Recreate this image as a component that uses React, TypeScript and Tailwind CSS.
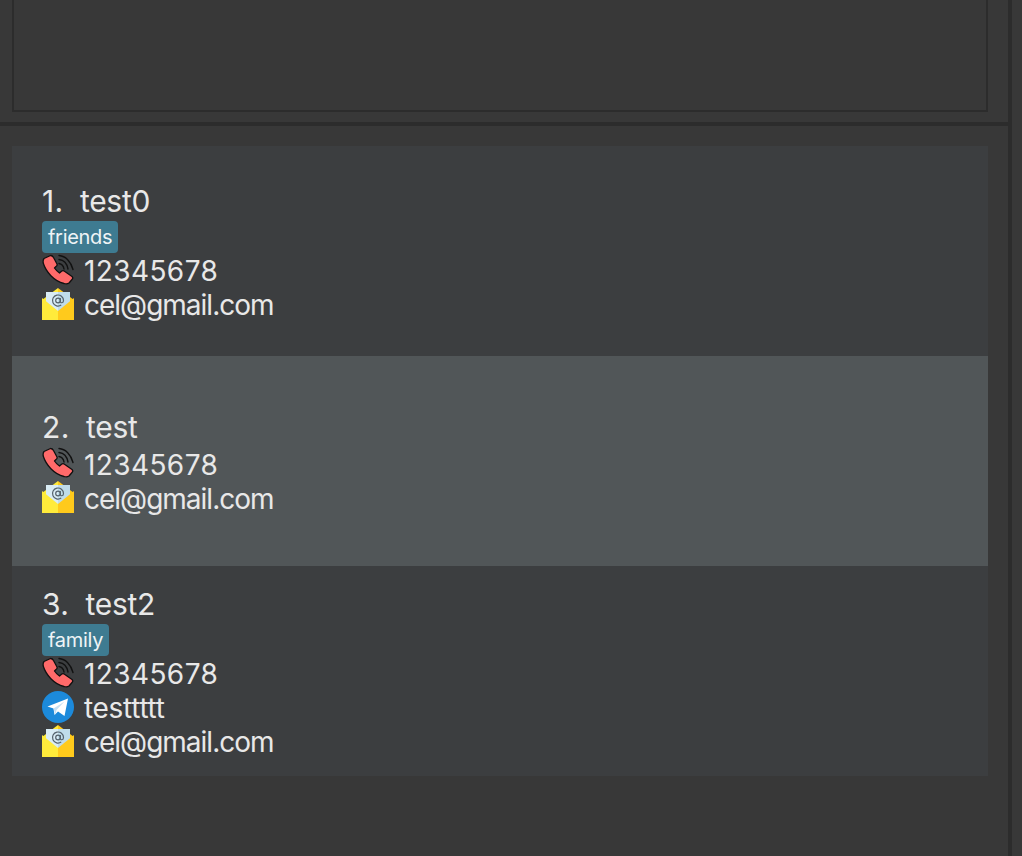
import React from "react";

type Person = {
  name: string;
  tag?: string;
  telegram?: string;
};

const people: Person[] = [
  { name: "test0", tag: "friends" },
  { name: "test" },
  { name: "test2", tag: "family", telegram: "testtttt" },
];

function PhoneIcon() {
  return (
    <svg viewBox="0 0 32 32" className="h-8 w-8 shrink-0">
      <path
        d="M2 4.500 8.500 1.500q2 0 3 2l3.500 6.500q.5 1.500-1 2.500L12.500 14q2 3 5 5l2-1.800q1.500-1 3 0l7.500 5.300q1.500 1.500 0 3l-3 3.500q-2 1.500-5 .5C12 27 4 18 1.200 9Q.8 6 2 4.500z"
        fill="#ff6a6a"
        stroke="#111"
        strokeWidth="1.300"
        strokeLinejoin="round"
      />
      <g fill="none" stroke="#111" strokeWidth="1.400" strokeLinecap="round">
        <path d="M17 9.500c2.500.5 4.500 2.500 5 5.500" />
        <path d="M17 5.500c4.500.5 8 4 9 9.500" />
        <path d="M17 1.500c6.500.5 12 6 14 14" />
      </g>
    </svg>
  );
}

function MailIcon() {
  return (
    <svg viewBox="0 0 32 32" className="h-8 w-8 shrink-0">
      <path d="M16 0 0 12v20h16z" fill="#ffeb3b" />
      <path d="M16 0l16 12v20H16z" fill="#ffca1c" />
      <path d="M4 4h12v20H4z" fill="#d9ecf5" />
      <path d="M16 4h12v20H16z" fill="#bfdcea" />
      <g fill="none" stroke="#55626c" strokeWidth="1.200">
        <circle cx="16" cy="12.500" r="2.300" />
        <path d="M18.300 10v3.500c0 1.800 3.200 1.800 3.200-1a5.500 5.500 0 1 0-2.300 4.500" />
      </g>
      <path d="M0 10l16 13v9H0z" fill="#ffeb3b" />
      <path d="M32 10 16 23v9h16z" fill="#ffca1c" />
    </svg>
  );
}

function TelegramIcon() {
  return (
    <svg viewBox="0 0 32 32" className="h-8 w-8 shrink-0">
      <circle cx="16" cy="16" r="16" fill="#1c8adb" />
      <path d="M5.500 15.500 26 7.500l-3.500 17.500-6.500-4.500-3.500 3.500-1-6.500z" fill="#fff" />
      <path d="M11.500 17.500 22.500 10.500l-8 8.500-1 4.500z" fill="#c7dff2" />
    </svg>
  );
}

function Row({
  icon,
  text,
  spacing,
  nudge,
}: {
  icon: React.ReactNode;
  text: string;
  spacing: string;
  nudge: string;
}) {
  return (
    <div className="flex h-[34px] items-center gap-[10px]">
      {icon}
      <span className={`text-[28px] leading-[34px] ${nudge} ${spacing}`}>{text}</span>
    </div>
  );
}

function PersonCard({ p, index, selected }: { p: Person; index: number; selected: boolean }) {
  const nudge = p.tag ? "pt-[2px]" : "pt-[4px]";
  return (
    <li
      className={`flex h-[210px] flex-col justify-center pl-[30px] text-[#e8e8e8] ${
        selected ? "bg-[#515658]" : "bg-[#3c3e40]"
      }`}
    >
      <div
        className={`h-[37px] whitespace-pre text-[30px] leading-[37px] tracking-[-0.3px] ${
          p.tag ? "pt-[1px]" : ""
        }`}
      >
        <span className="tracking-[0.4px]">{index + 1}.</span>
        {"  "}
        {p.name}
      </div>
      {p.tag && (
        <div className="flex h-[34px] items-center pt-[2px]">
          <span className="flex h-[32px] items-center rounded-[4px] bg-[#3e7b91] px-[6px] text-[20px] tracking-[-0.3px] text-[#eef4f6]">
            {p.tag}
          </span>
        </div>
      )}
      <Row icon={<PhoneIcon />} text="12345678" spacing="tracking-[0.4px]" nudge={nudge} />
      {p.telegram && (
        <Row icon={<TelegramIcon />} text={p.telegram} spacing="tracking-[-0.3px]" nudge={nudge} />
      )}
      <Row icon={<MailIcon />} text="cel@gmail.com" spacing="tracking-[-1px]" nudge={nudge} />
    </li>
  );
}

export default function App() {
  return (
    <div className="flex h-[856px] w-[1022px] overflow-hidden bg-[#383838] font-['Inter','Liberation_Sans',sans-serif]">
      <div className="flex w-[1008px] flex-col">
        <div className="h-[122px] pl-3 pr-5">
          <div className="h-[112px] border-x-2 border-b-2 border-[#2c2c2c]" />
        </div>
        <div className="h-1 bg-[#2c2c2c]" />
        <ul className="pl-3 pr-5 pt-5">
          {people.map((p, i) => (
            <PersonCard key={p.name} p={p} index={i} selected={i === 1} />
          ))}
        </ul>
      </div>
      <div className="w-1 bg-[#2c2c2c]" />
      <div className="flex-1" />
    </div>
  );
}
